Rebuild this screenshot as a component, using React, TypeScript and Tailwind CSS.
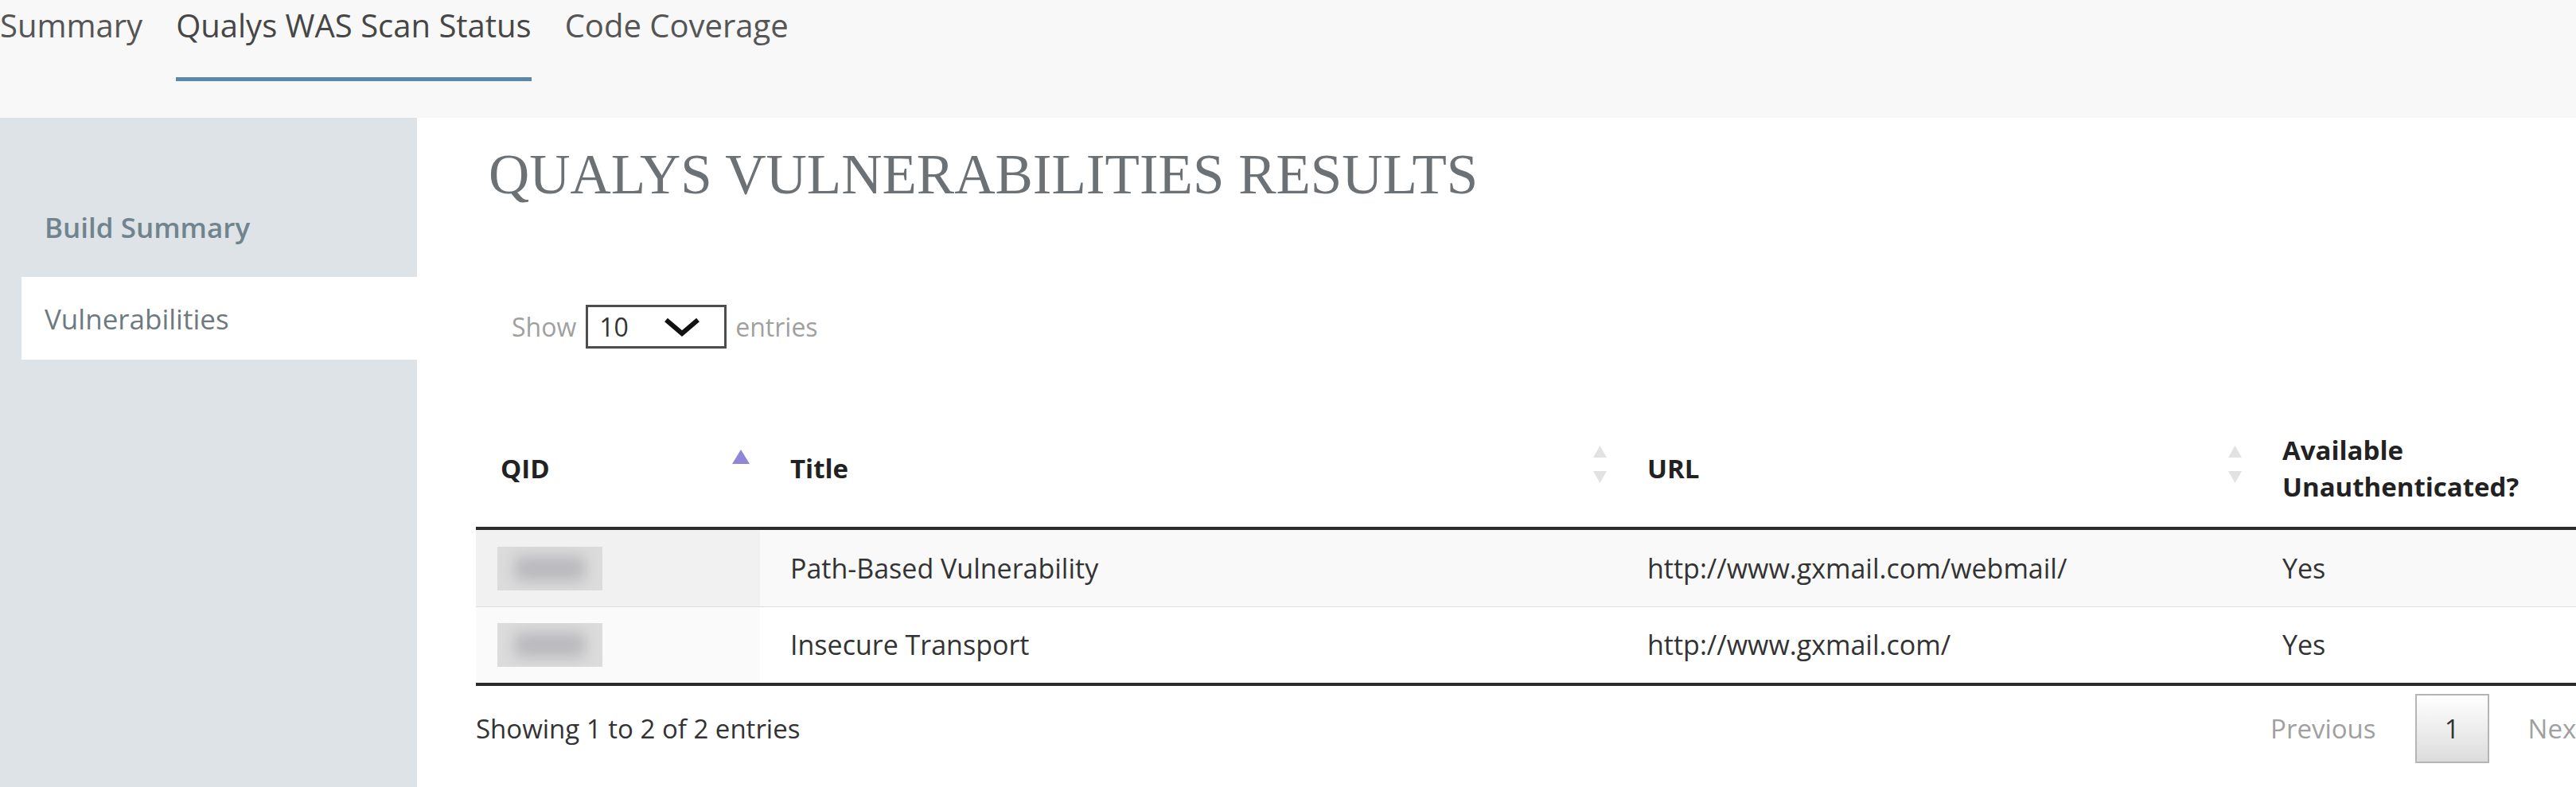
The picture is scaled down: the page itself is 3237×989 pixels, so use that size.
import { ReactNode } from "react";

type Row = { title: string; url: string; unauth: string };

const rows: Row[] = [
  { title: "Path-Based Vulnerability", url: "http://www.gxmail.com/webmail/", unauth: "Yes" },
  { title: "Insecure Transport", url: "http://www.gxmail.com/", unauth: "Yes" },
];

const cols = "grid grid-cols-[357px_1077px_798px_452px]";

function SortAsc() {
  return (
    <svg className="absolute right-[13px] top-[50px] h-[18px] w-[22px]" viewBox="0 0 22 18">
      <polygon points="11,0 22,18 0,18" fill="#8f86d8" />
    </svg>
  );
}

function SortBoth() {
  return (
    <svg className="absolute right-[13px] top-[45px] h-[47px] w-[17px]" viewBox="0 0 17 47">
      <polygon points="8.5,0 17,15 0,15" fill="#e2e2e2" />
      <polygon points="0,32 17,32 8.5,47" fill="#e2e2e2" />
    </svg>
  );
}

function Th({ children, icon, first }: { children: ReactNode; icon?: ReactNode; first?: boolean }) {
  return (
    <div className={`relative flex items-center ${first ? "pl-[31px]" : "pl-[38px]"}`}>
      <span className="leading-[46px]">{children}</span>
      {icon}
    </div>
  );
}

function Blurred() {
  return (
    <div className="relative h-[55px] w-[132px] overflow-hidden bg-[#dcdcdc]">
      <div className="absolute inset-x-[22px] inset-y-[12px] bg-[#b9b9bd] blur-[9px]" />
    </div>
  );
}

export default function App() {
  return (
    <div className="h-[989px] w-[3237px] overflow-hidden bg-white font-['Open_Sans',sans-serif]">
      {/* tabs */}
      <nav className="flex h-[148px] bg-[#f8f8f8] pt-[12px] text-[40px] leading-none text-[#555]">
        <span>Summary</span>
        <div className="ml-[42px] flex flex-col">
          <span className="text-[#464646]">Qualys WAS Scan Status</span>
          <span className="mt-[45px] h-[5px] bg-[#5a88ad]" />
        </div>
        <span className="ml-[42px]">Code Coverage</span>
      </nav>

      <div className="flex h-[841px]">
        <aside className="w-[524px] shrink-0 bg-[#dde3e6] pl-[27px] pt-[85px] text-[35px] leading-none">
          <div className="flex h-[104px] items-center pl-[29px] font-semibold text-[#71838d]">Build Summary</div>
          <div className="mt-[11px] flex h-[104px] items-center bg-white pl-[29px] font-medium text-[#6e7a80]">
            Vulnerabilities
          </div>
        </aside>

        <main className="w-[2758px] shrink-0 pl-[74px] pt-[36px]">
          <h1 className="ml-[16px] font-['Liberation_Serif',serif] text-[71px] leading-[70px] text-[#6c7176]">
            QUALYS VULNERABILITIES RESULTS
          </h1>

          {/* length menu */}
          <div className="ml-[45px] mt-[129px] flex h-[55px] items-center text-[32px] text-[#a0a0a0]">
            <span>Show</span>
            <div className="ml-[12px] flex h-[55px] w-[177px] items-center border-[3px] border-[#4d4d4d] pl-[14px] text-[#333]">
              <span>10</span>
              <svg className="ml-auto mr-[30px] h-[24px] w-[46px]" viewBox="0 0 46 24">
                <polyline points="3,3 23,20 43,3" fill="none" stroke="#111" strokeWidth="6" />
              </svg>
            </div>
            <span className="ml-[11px]">entries</span>
          </div>

          {/* table */}
          <div className="mt-[77px] w-[2684px] text-[34px] text-[#333]">
            <div className={`${cols} h-[151px] border-b-[4px] border-[#2b2b2b] text-[33px] font-bold text-[#222]`}>
              <Th first icon={<SortAsc />}>QID</Th>
              <Th icon={<SortBoth />}>Title</Th>
              <Th icon={<SortBoth />}>URL</Th>
              <Th>
                Available
                <br />
                Unauthenticated?
              </Th>
            </div>
            {rows.map((r, i) => (
              <div
                key={r.title}
                className={`${cols} h-[96px] ${i === 0 ? "bg-[#f9f9f9]" : "border-t border-[#dddddd] bg-white"}`}
              >
                <div className={`flex items-center pl-[27px] ${i === 0 ? "bg-[#f1f1f1]" : "bg-[#fafafa]"}`}>
                  <Blurred />
                </div>
                <div className="flex items-center pl-[38px]">{r.title}</div>
                <div className="flex items-center pl-[38px]">{r.url}</div>
                <div className="flex items-center pl-[38px]">{r.unauth}</div>
              </div>
            ))}
            <div className="h-[4px] bg-[#2b2b2b]" />

            {/* info + pagination */}
            <div className="mt-[10px] flex items-center justify-between text-[33px]">
              <span>Showing 1 to 2 of 2 entries</span>
              <div className="flex items-center">
                <span className="px-[33px] text-[#a0a0a0]">Previous</span>
                <span className="ml-[16px] flex h-[87px] w-[93px] items-center justify-center border-2 border-[#b5b5b5] bg-gradient-to-b from-white to-[#dcdcdc] text-[#333]">
                  1
                </span>
                <span className="ml-[16px] px-[33px] text-[#a0a0a0]">Next</span>
              </div>
            </div>
          </div>
        </main>
      </div>
    </div>
  );
}
